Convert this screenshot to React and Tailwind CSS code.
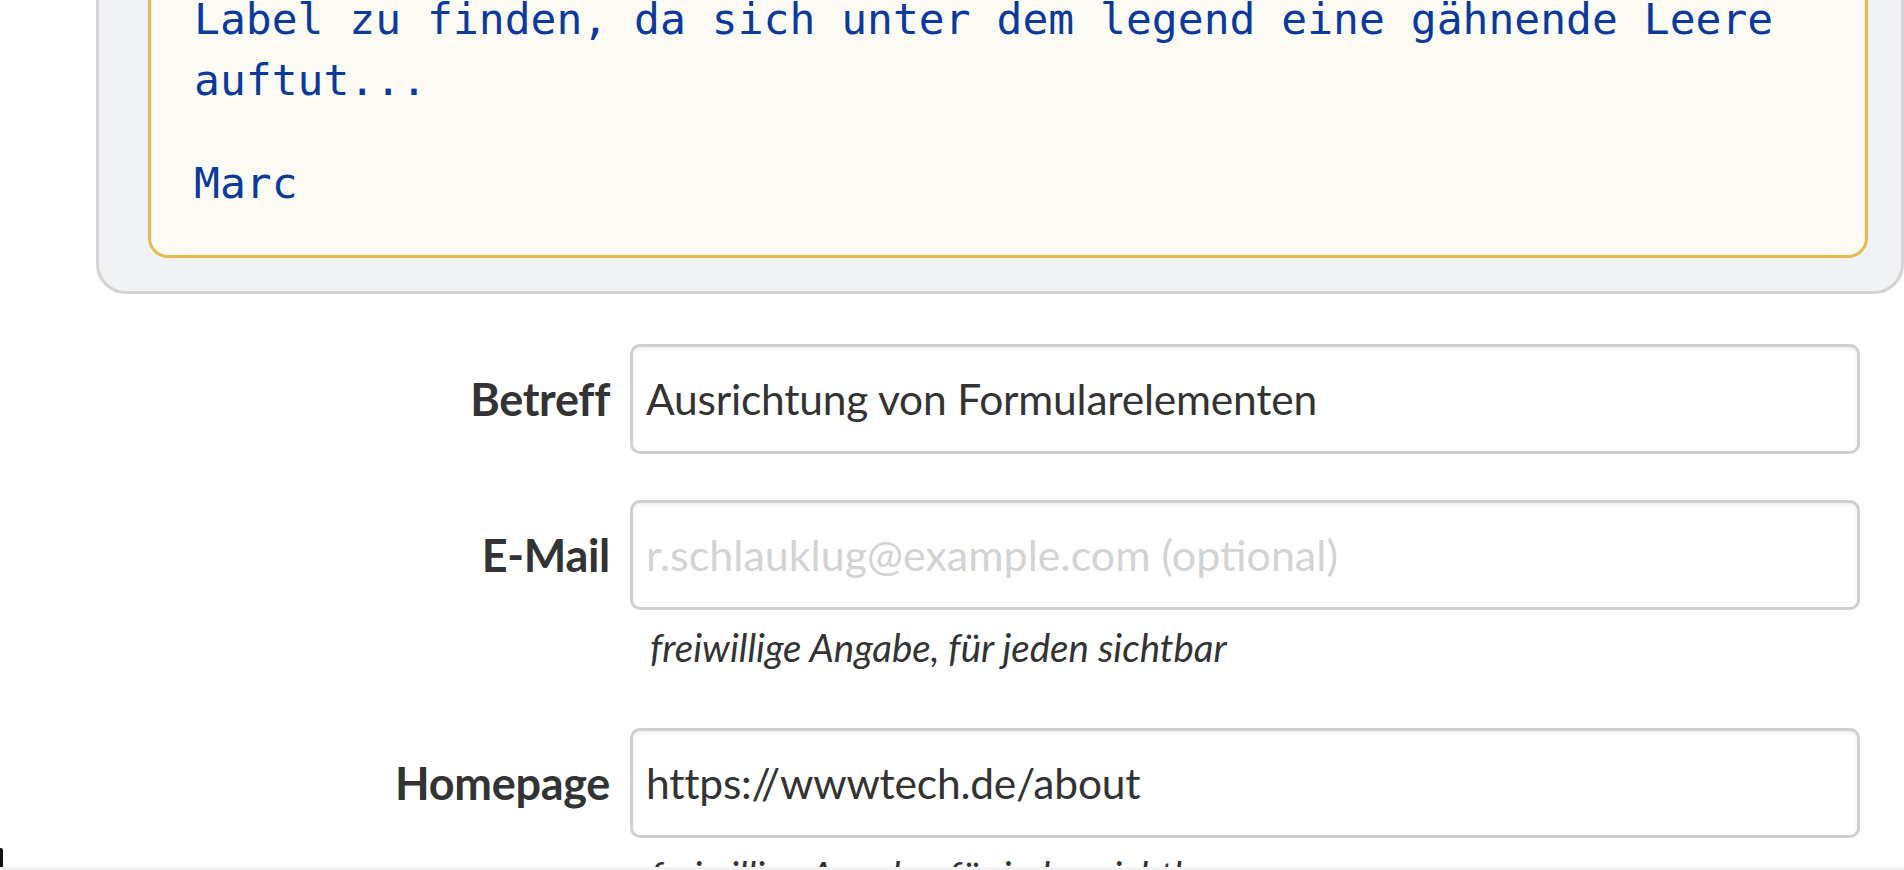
import React from "react";

const mono = { fontFamily: '"DejaVu Sans Mono", "Liberation Mono", monospace' };

function Row({ label, children }) {
  return (
    <div className="flex items-center">
      <label className="w-[610px] shrink-0 text-right text-[45px] font-bold leading-none text-[#333333] tracking-[-0.3px]">
        {label}
      </label>
      <div className="ml-[20px] w-[1230px]">{children}</div>
    </div>
  );
}

function Input({ value, placeholder }) {
  return (
    <div className="flex h-[110px] items-center rounded-[10px] border-[3px] border-[#cfcfcf] bg-white pl-[13px] shadow-[inset_0_2px_4px_rgba(0,0,0,0.07)]">
      {value ? (
        <span className="whitespace-nowrap text-[42.5px] tracking-[-0.2px] text-[#333333]">{value}</span>
      ) : (
        <span className="whitespace-nowrap text-[43px] text-[#d3d3d3]">{placeholder}</span>
      )}
    </div>
  );
}

function Hint() {
  return (
    <div className="ml-[650px] mt-[13px] whitespace-nowrap text-[38.5px] italic leading-[48px] text-[#333333]">
      freiwillige Angabe, für jeden sichtbar
    </div>
  );
}

export default function App() {
  return (
    <div
      className="relative h-[870px] w-[1904px] overflow-hidden bg-white"
      style={{ fontFamily: 'Lato, "Open Sans", sans-serif' }}
    >
      <div className="ml-[96px] mt-[-90px] w-[1808px] rounded-[30px] border-[3px] border-[#d3d3d5] bg-[#f1f2f4] pb-[33px] pl-[49px] pr-[33px] pt-[33px]">
        <div
          className="rounded-[20px] border-[3px] border-[#e5ba4f] bg-[#fbfbf3] pb-[41px] pl-[43px] pr-[44px] pt-[40px] text-[43px] leading-[61px] text-[#0b3a9c]"
          style={mono}
        >
          <p className="mb-[42px] whitespace-nowrap">
            Label zu finden, da sich unter dem legend eine gähnende Leere
            <br />
            auftut...
          </p>
          <p className="whitespace-nowrap">Marc</p>
        </div>
      </div>

      <form className="mt-[50px]">
        <Row label="Betreff">
          <Input value="Ausrichtung von Formularelementen" />
        </Row>
        <div className="mt-[46px]">
          <Row label="E-Mail">
            <Input placeholder="r.schlauklug@example.com (optional)" />
          </Row>
        </div>
        <Hint />
        <div className="mt-[57px]">
          <Row label="Homepage">
            <Input value="https://wwwtech.de/about" />
          </Row>
        </div>
        <Hint />
      </form>

      <div className="absolute bottom-0 left-0 h-[3px] w-full bg-[#f3f3f3]" />
      <div className="absolute bottom-[3px] left-0 h-[19px] w-[3px] rounded-tr-[2px] bg-[#111111]" />
    </div>
  );
}
